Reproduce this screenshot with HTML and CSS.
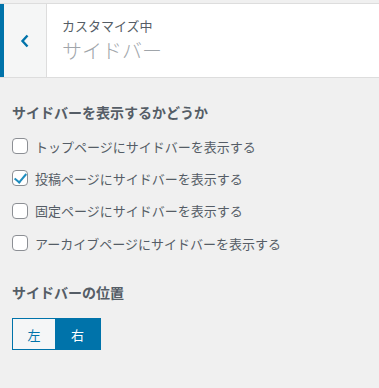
FILE: index.html
```html
<!DOCTYPE html>
<html lang="ja">

<head>
    <meta charset="UTF-8">
    <meta name="viewport" content="width=device-width, initial-scale=1.0">
    <title>カスタマイズ中 サイドバー</title>
    <link rel="stylesheet" href="styles.css">
</head>

<body>
    <div class="panel-header">
        <button class="back-btn" aria-label="戻る">
            <svg width="10" height="14" viewBox="0 0 10 14">
                <path d="M7.5 1.5 L2.5 7 L7.5 12.5" fill="none" stroke="#0073aa" stroke-width="2.4" />
            </svg>
        </button>
        <div class="panel-title">
            <span class="action">カスタマイズ中</span>
            <span class="title">サイドバー</span>
        </div>
    </div>

    <div class="controls">
        <h3 class="control-title">サイドバーを表示するかどうか</h3>
        <label class="check-row"><input type="checkbox"><span>トップページにサイドバーを表示する</span></label>
        <label class="check-row"><input type="checkbox" checked><span>投稿ページにサイドバーを表示する</span></label>
        <label class="check-row"><input type="checkbox"><span>固定ページにサイドバーを表示する</span></label>
        <label class="check-row"><input type="checkbox"><span>アーカイブページにサイドバーを表示する</span></label>

        <h3 class="control-title position">サイドバーの位置</h3>
        <div class="button-group">
            <button class="seg">左</button>
            <button class="seg active">右</button>
        </div>
    </div>
</body>

</html>
```

FILE: styles.css
```css
body {
    font-family: 'Noto Sans CJK JP', 'Noto Sans', sans-serif;
    margin: 0;
    padding: 3px 0 0;
    background: #f0f0f0;
    color: #444;
}

/* ヘッダー */
.panel-header {
    display: flex;
    height: 73px;
    background: #fff;
    border-top: 1px solid #ddd;
    border-bottom: 1px solid #ddd;
}

.back-btn {
    width: 47px;
    padding: 0;
    border: none;
    border-left: 4px solid #0073aa;
    border-right: 1px solid #ddd;
    background: #f5f6f6;
    display: flex;
    justify-content: center;
    align-items: center;
    cursor: pointer;
}

.panel-title {
    display: flex;
    flex-direction: column;
    justify-content: center;
    padding-left: 15px;
}

.action {
    font-size: 13px;
    line-height: 18px;
    color: #555d66;
}

.title {
    font-size: 20px;
    line-height: 28px;
    font-weight: 300;
    color: #a0a5aa;
    margin-top: 2px;
}

/* コントロール */
.controls {
    padding: 14px 12px;
}

.control-title {
    font-size: 14px;
    font-weight: bold;
    color: #555d66;
    margin: 10px 0 8px;
    line-height: 20px;
}

.control-title.position {
    margin-top: 23px;
    margin-bottom: 16px;
}

.check-row {
    display: flex;
    align-items: center;
    height: 32.3px;
    font-size: 13px;
    color: #555d66;
}

.check-row input {
    appearance: none;
    width: 16px;
    height: 16px;
    margin: 0 7px 0 0;
    border: 1px solid #8c8f94;
    border-radius: 4px;
    background: #fff;
    position: relative;
}

.check-row input:checked::after {
    content: '';
    position: absolute;
    left: 4px;
    top: 0px;
    width: 5px;
    height: 10px;
    border: solid #1e8cbe;
    border-width: 0 2.5px 2.5px 0;
    transform: rotate(40deg);
}

/* ボタングループ */
.button-group {
    display: inline-flex;
    border: 1px solid #0073aa;
}

.seg {
    font-family: inherit;
    font-size: 13px;
    height: 30px;
    border: none;
    padding: 0;
    cursor: pointer;
}

.seg:first-child {
    width: 42px;
    background: #f5f6f7;
    color: #0073aa;
}

.seg.active {
    width: 45px;
    background: #0073aa;
    color: #fff;
}
```
